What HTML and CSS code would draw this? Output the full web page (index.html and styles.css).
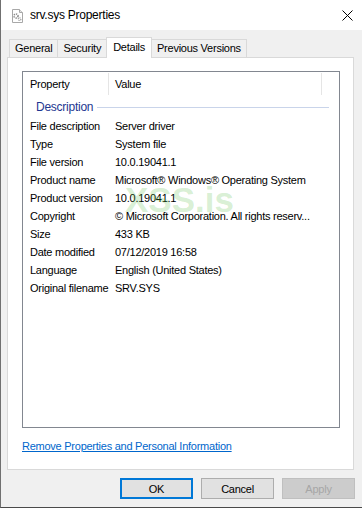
FILE: index.html
```html
<!DOCTYPE html>
<html lang="en">
<head>
  <meta charset="UTF-8">
  <title>srv.sys Properties</title>
  <link rel="stylesheet" href="styles.css">
</head>
<body>
  <div class="window">
    <!-- Title bar -->
    <div class="titlebar">
      <svg class="file-icon" width="13" height="14" viewBox="0 0 13 14">
        <path d="M1.5 0.5h7l3 3v10h-10z" fill="#fff" stroke="#a8a8a8"></path>
        <path d="M8.5 0.5v3h3" fill="#e4e4e4" stroke="#a8a8a8"></path>
        <circle cx="5" cy="7" r="2" fill="none" stroke="#8a8a8a" stroke-width="1.6" stroke-dasharray="1.2 0.9"></circle>
        <circle cx="8.6" cy="10.2" r="1.3" fill="none" stroke="#9a9a9a" stroke-width="1.2" stroke-dasharray="1 0.8"></circle>
      </svg>
      <span class="title">srv.sys Properties</span>
      <svg class="close" width="11" height="11" viewBox="0 0 11 11">
        <path d="M0.5 0.5l10 10M10.5 0.5l-10 10" stroke="#000" stroke-width="1"></path>
      </svg>
    </div>

    <div class="main">
      <div class="tabs">
        <div class="tab">General</div>
        <div class="tab">Security</div>
        <div class="tab tab-active">Details</div>
        <div class="tab">Previous Versions</div>
      </div>

      <div class="panel">
        <div class="listview">
          <div class="lv-header">
            <div class="col col-prop">Property</div>
            <div class="col col-val">Value</div>
          </div>
          <div class="group">
            <span>Description</span>
            <div class="group-line"></div>
          </div>
          <div class="row"><span>File description</span><span>Server driver</span></div>
          <div class="row"><span>Type</span><span>System file</span></div>
          <div class="row"><span>File version</span><span>10.0.19041.1</span></div>
          <div class="row"><span>Product name</span><span>Microsoft® Windows® Operating System</span></div>
          <div class="row"><span>Product version</span><span>10.0.19041.1</span></div>
          <div class="row"><span>Copyright</span><span>© Microsoft Corporation. All rights reserv...</span></div>
          <div class="row"><span>Size</span><span>433 KB</span></div>
          <div class="row"><span>Date modified</span><span>07/12/2019 16:58</span></div>
          <div class="row"><span>Language</span><span>English (United States)</span></div>
          <div class="row"><span>Original filename</span><span>SRV.SYS</span></div>
          <div class="watermark">XSS.is</div>
        </div>
        <a href="#" class="link">Remove Properties and Personal Information</a>
      </div>

      <div class="buttons">
        <button class="btn btn-default">OK</button>
        <button class="btn">Cancel</button>
        <button class="btn" disabled>Apply</button>
      </div>
    </div>
  </div>
</body>
</html>
```

FILE: styles.css
```css
* {
  margin: 0;
  padding: 0;
  box-sizing: border-box;
}

body {
  font-family: "Liberation Sans", Arial, sans-serif;
  font-size: 11px;
  letter-spacing: -0.25px;
  color: #000;
  background: #f0f0f0;
}

.window {
  width: 362px;
  height: 508px;
  border-left: 1px solid #707070;
  border-bottom: 1px solid #4a4a4a;
  background: #f0f0f0;
  display: flex;
  flex-direction: column;
}

/* Title bar */
.titlebar {
  height: 30px;
  background: #fff;
  display: flex;
  align-items: center;
  padding: 0 9px 0 10px;
}

.file-icon {
  margin-top: 1px;
}

.title {
  margin-left: 6px;
  font-size: 12px;
}

.close {
  margin-left: auto;
}

.main {
  padding: 7px 7px 0 6px;
}

/* Tabs */
.tabs {
  display: flex;
  align-items: flex-end;
  height: 20px;
  padding-left: 2px;
}

.tab {
  height: 18px;
  line-height: 17px;
  padding: 0 5px;
  border: 1px solid #d9d9d9;
  border-bottom: none;
  background: #f0f0f0;
  margin-left: -1px;
}

.tab:first-child {
  margin-left: 0;
}

.tab-active {
  height: 21px;
  line-height: 18px;
  padding: 0 6px;
  background: #fff;
  margin-bottom: -1px;
  position: relative;
  z-index: 1;
}

/* Panel */
.panel {
  height: 413px;
  margin-right: 1px;
  border: 1px solid #d9d9d9;
  background: #fff;
  padding: 13px 13px 0 14px;
}

.listview {
  position: relative;
  height: 357px;
  border: 1px solid #828790;
  overflow: hidden;
}

.lv-header {
  display: flex;
  align-items: center;
  height: 24px;
}

.col {
  height: 22px;
  line-height: 22px;
  border-right: 1px solid #e5e5e5;
}

.col-prop {
  width: 86px;
  padding-left: 7px;
}

.col-val {
  width: 213px;
  padding-left: 6px;
}

.group {
  display: flex;
  align-items: center;
  height: 21px;
  padding-left: 13px;
  font-size: 12px;
  color: #1e3791;
}

.group-line {
  flex: 1;
  height: 1px;
  background: #c9d4ea;
  margin: 1px 10px 0 4px;
}

.row {
  display: grid;
  grid-template-columns: 85px 1fr;
  padding-left: 7px;
  height: 18px;
  line-height: 18px;
  white-space: nowrap;
}

.watermark {
  position: absolute;
  left: 102px;
  top: 110px;
  font-size: 35px;
  font-weight: bold;
  letter-spacing: 0;
  line-height: 1;
  color: rgba(90, 190, 70, 0.24);
}

.link {
  display: inline-block;
  margin-top: 11px;
  line-height: 14px;
  color: #0066cc;
  text-decoration: underline;
}

/* Buttons */
.buttons {
  display: flex;
  justify-content: flex-end;
  gap: 8px;
  margin-top: 8px;
}

.btn {
  width: 73px;
  height: 21px;
  border: 1px solid #adadad;
  background: #e1e1e1;
  font-family: inherit;
  font-size: 11px;
  letter-spacing: inherit;
  color: #000;
}

.btn-default {
  border: 2px solid #0078d7;
}

.btn:disabled {
  background: #cccccc;
  border-color: #bfbfbf;
  color: #a6a6a6;
}
```
